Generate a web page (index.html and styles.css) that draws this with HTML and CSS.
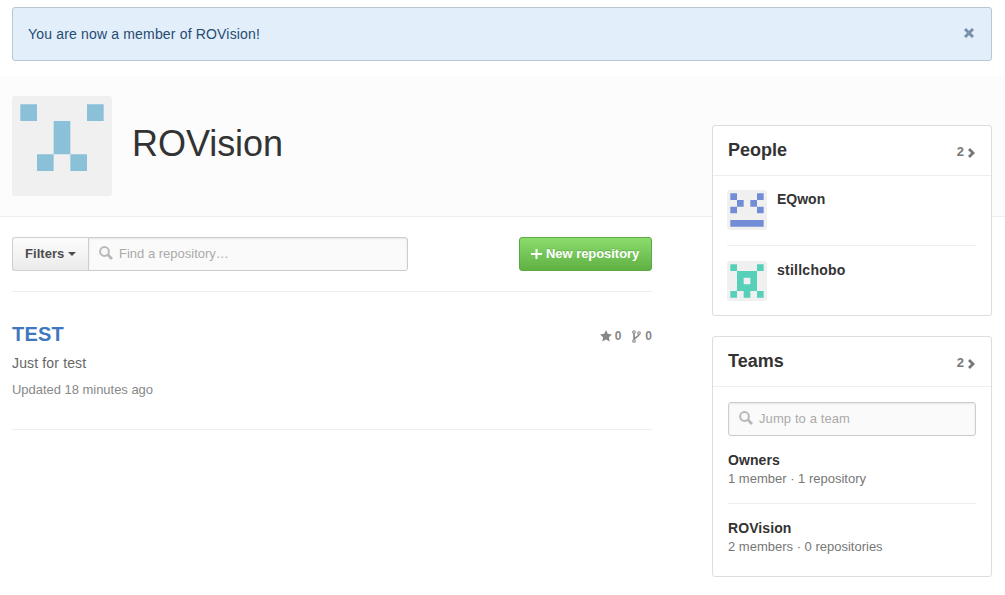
FILE: index.html
```html
<!DOCTYPE html>
<html lang="en">
<head>
<meta charset="utf-8">
<title>ROVision</title>
<link rel="stylesheet" href="styles.css">
</head>
<body>
<div class="container flash">
  <span class="flash-text">You are now a member of ROVision!</span>
  <svg class="close" width="10" height="10" viewBox="0 0 10 10"><path d="M1 1 9 9M9 1 1 9" fill="none" stroke="currentColor" stroke-width="3"/></svg>
</div>
<header class="orghead">
  <div class="container orghead-inner">
    <svg class="avatar" width="100" height="100" viewBox="0 0 420 420"><path fill="#8bc0d9" d="M35 35h70v70H35zM315 35h70v70h-70zM175 105h70v140h-70zM105 245h70v70h-70zM245 245h70v70h-70z"/></svg>
    <h1 class="org-name">ROVision</h1>
  </div>
</header>
<div class="container columns">
  <main class="main">
    <div class="toolbar">
      <button class="filters"><span class="filters-text">Filters</span><span class="caret"></span></button>
      <div class="search repo-search">
        <svg class="search-icon" width="14" height="14" viewBox="0 0 14 14"><circle cx="5.5" cy="5.5" r="4.4" fill="none" stroke="currentColor" stroke-width="2"/><path d="M8.6 8.6 13 13" stroke="currentColor" stroke-width="2.8"/></svg>
        <span class="placeholder find">Find a repository…</span>
      </div>
      <button class="new-repo"><svg width="11" height="12" viewBox="0 0 11 12"><path d="M5.5 1v10M0 6h11" stroke="currentColor" stroke-width="2"/></svg><span class="new-text">New repository</span></button>
    </div>
    <article class="repo">
      <div class="repo-head">
        <h2 class="repo-name">TEST</h2>
        <div class="stats">
          <svg width="12" height="12" viewBox="0 0 12 12"><path fill="currentColor" d="M6 0 7.7 3.8 12 4.4 8.9 7.3 9.7 11.5 6 9.4 2.3 11.5 3.1 7.3 0 4.4 4.3 3.8z"/></svg><span class="stars">0</span>
          <svg width="9" height="13" viewBox="0 0 9 13"><g fill="none" stroke="currentColor" stroke-width="1.1"><circle cx="2" cy="2" r="1.3"/><circle cx="2" cy="11" r="1.3"/><circle cx="7" cy="3" r="1.3"/></g><path d="M2 3.3v6.4M7 4.3C7 7.3 2.6 6.5 2.3 9.5" fill="none" stroke="currentColor" stroke-width="1.7"/></svg><span class="forks">0</span>
        </div>
      </div>
      <p class="desc"><span class="desc-text">Just for test</span></p>
      <p class="updated"><span class="updated-text">Updated 18 minutes ago</span></p>
    </article>
  </main>
  <aside class="sidebar">
    <section class="box">
      <div class="box-head"><h3 class="box-title">People</h3><span class="count">2</span><svg class="chevron" width="7" height="10" viewBox="0 0 7 10"><path d="M1 1 5 5 1 9" fill="none" stroke="currentColor" stroke-width="2.8"/></svg></div>
      <div class="person">
        <svg class="avatar" width="40" height="40" viewBox="0 0 420 420"><path fill="#728cd6" d="M35 35h70v70H35zM315 35h70v70h-70zM105 105h70v70h-70zM245 105h70v70h-70zM35 175h70v70H35zM315 175h70v70h-70zM35 315h350v70H35z"/></svg>
        <strong class="login">EQwon</strong>
      </div>
      <div class="person">
        <svg class="avatar" width="40" height="40" viewBox="0 0 420 420"><path fill="#56d0b8" fill-rule="evenodd" d="M35 35h70v70H35zM315 35h70v70h-70zM105 105h210v210H105zM175 175v70h70v-70zM35 315h70v70H35zM175 315h70v70h-70zM315 315h70v70h-70z"/></svg>
        <strong class="login wide">stillchobo</strong>
      </div>
    </section>
    <section class="box teams">
      <div class="box-head"><h3 class="box-title">Teams</h3><span class="count">2</span><svg class="chevron" width="7" height="10" viewBox="0 0 7 10"><path d="M1 1 5 5 1 9" fill="none" stroke="currentColor" stroke-width="2.8"/></svg></div>
      <div class="search team-search">
        <svg class="search-icon" width="14" height="14" viewBox="0 0 14 14"><circle cx="5.5" cy="5.5" r="4.4" fill="none" stroke="currentColor" stroke-width="2"/><path d="M8.6 8.6 13 13" stroke="currentColor" stroke-width="2.8"/></svg>
        <span class="placeholder jump">Jump to a team</span>
      </div>
      <div class="team"><strong class="team-name">Owners</strong><span class="team-meta">1 member · 1 repository</span></div>
      <div class="team"><strong class="team-name">ROVision</strong><span class="team-meta">2 members · 0 repositories</span></div>
    </section>
  </aside>
</div>
</body>
</html>
```
FILE: styles.css
```css
* { box-sizing: border-box; }
body { margin: 0; padding-top: 7px; background: #fff; color: #333; font: 14px/20px "Liberation Sans", Arial, sans-serif; overflow: hidden; }
h1, h2, h3, p { margin: 0; }
svg { display: block; flex: none; }
button { font: inherit; margin: 0; }
.container { width: 980px; margin-left: 12px; }
.flash { display: flex; align-items: center; justify-content: space-between; height: 54px; padding: 0 17px 0 15px; border: 1px solid #bac6d3; border-radius: 3px; background: #e2eef9; color: #264c72; }
.flash-text { letter-spacing: .17px; }
.close { color: #7890ac; margin-bottom: 2px; }
.orghead { height: 141px; margin-top: 15px; padding-top: 20px; background: #fcfcfc; border-bottom: 1px solid #eee; }
.orghead-inner { display: flex; gap: 20px; }
.avatar { background: #f0f0f0; border-radius: 3px; }
.org-name { padding-top: 28px; font-size: 36px; line-height: 40px; font-weight: 400; letter-spacing: -.05px; }
.columns { display: flex; justify-content: space-between; align-items: flex-start; }
.main { width: 640px; }
.toolbar { display: flex; height: 75px; padding-top: 20px; border-bottom: 1px solid #eee; }
.filters { display: flex; align-items: center; gap: 4px; width: 76px; height: 34px; padding: 0 0 1px 12px; border: 1px solid #d0d0d0; border-right: 0; border-radius: 3px 0 0 3px; background: linear-gradient(#fcfcfc, #ebebeb); color: #4c4c4c; font-size: 13px; font-weight: 700; white-space: nowrap; }
.filters-text { letter-spacing: .05px; }
.caret { border: 4px solid transparent; border-top-color: #4c4c4c; border-bottom: 0; margin-top: 1px; }
.search { display: flex; align-items: center; height: 34px; padding-left: 10px; border: 1px solid #ccc; border-radius: 3px; background: #fafafa; box-shadow: inset 0 1px 2px rgba(0,0,0,.075); color: #aaa; font-size: 13px; }
.search-icon { margin: 0 6px 2px 0; color: #b8b8b8; }
.placeholder { padding-bottom: 1px; white-space: nowrap; }
.jump { letter-spacing: .1px; }
.repo-search { width: 320px; border-radius: 0 3px 3px 0; }
.new-repo { display: flex; align-items: center; gap: 4px; width: 133px; height: 34px; margin-left: auto; padding: 0 0 1px 11px; border: 1px solid #5ca941; border-radius: 3px; background: linear-gradient(#8add6d, #60b044); color: #fff; font-size: 13px; font-weight: 700; text-shadow: 0 -1px 0 rgba(0,0,0,.15); white-space: nowrap; }
.new-text { letter-spacing: -.05px; }
.repo { height: 138px; padding-top: 30px; border-bottom: 1px solid #eee; }
.repo-head { display: flex; justify-content: space-between; height: 24px; }
.repo-name { font-size: 20px; line-height: 24px; color: #4078c0; letter-spacing: .2px; }
.stats { display: flex; align-items: center; height: 28px; color: #888; font-size: 12px; font-weight: 700; }
.stars { margin: 0 11px 0 3px; }
.forks { margin-left: 4px; }
.desc { margin-top: 7px; color: #666; letter-spacing: .15px; }
.updated { margin-top: 8px; color: #888; font-size: 13px; line-height: 18px; letter-spacing: -.03px; }
.sidebar { width: 280px; margin-top: -92px; }
.box { height: 191px; padding: 0 15px 0 14px; border: 1px solid #ddd; border-radius: 3px; background: #fff; }
.box-head { display: flex; align-items: center; height: 50px; margin: 0 -15px 0 -14px; padding: 0 16px 0 15px; border-bottom: 1px solid #eee; }
.box-title { flex: 1; padding-bottom: 2px; font-size: 18px; line-height: 20px; }
.count { padding-top: 3px; margin-right: 4px; color: #777; font-size: 13px; font-weight: 700; }
.chevron { margin-top: 4px; color: #777; }
.person { display: flex; gap: 10px; height: 69px; padding-top: 14px; }
.person + .person { height: 71px; padding-top: 15px; border-top: 1px solid #eee; }
.login { line-height: 19px; }
.wide { letter-spacing: .25px; }
.teams { height: 241px; margin-top: 20px; padding: 0 15px; }
.teams .box-head { margin: 0 -15px; }
.team-search { margin-top: 15px; }
.team { display: flex; flex-direction: column; height: 67px; padding-top: 15px; }
.team + .team { border-top: 1px solid #eee; }
.team-name { line-height: 19px; letter-spacing: .08px; }
.team-meta { color: #777; font-size: 13px; line-height: 18px; }
```
